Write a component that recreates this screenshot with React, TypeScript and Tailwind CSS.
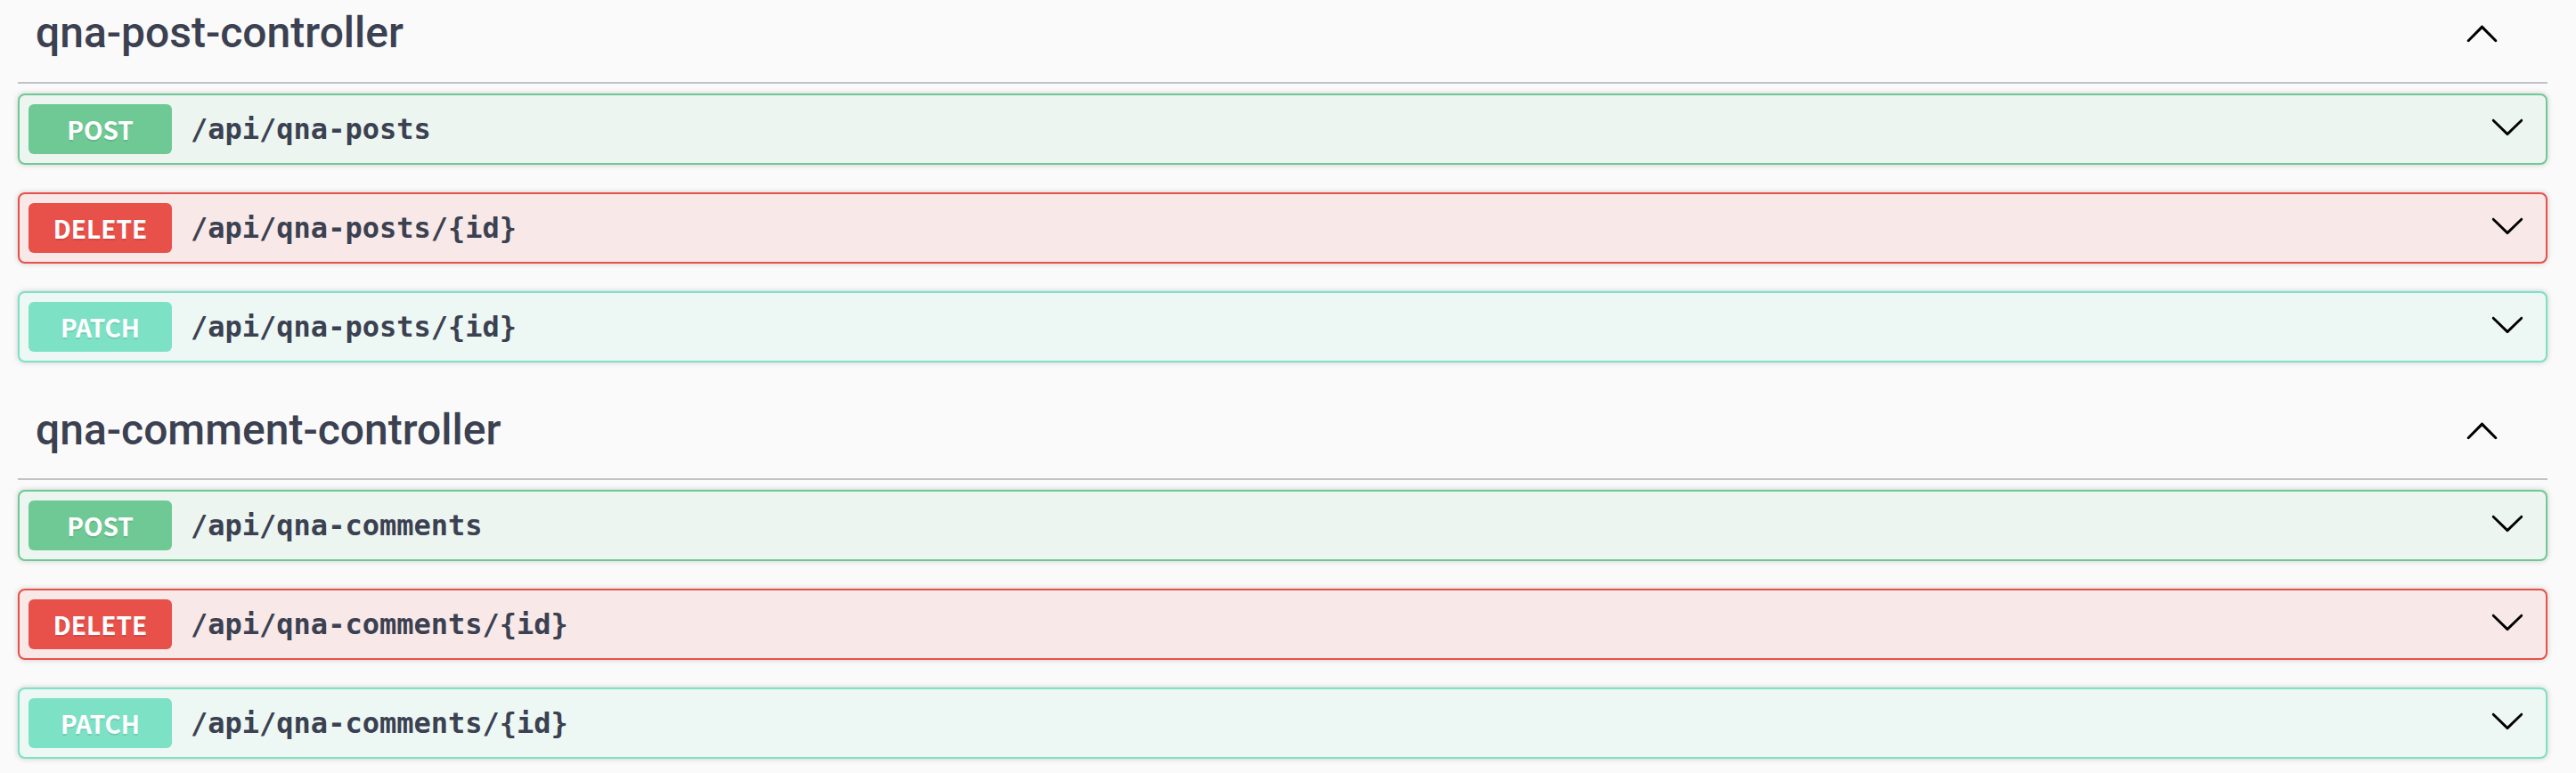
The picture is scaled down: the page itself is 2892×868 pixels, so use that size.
import React from "react";

type Method = "POST" | "DELETE" | "PATCH";

const styles: Record<Method, { block: string; badge: string }> = {
  POST: {
    block: "border-[#6fc995] bg-[#ecf5f0]",
    badge: "bg-[#6fc995]",
  },
  DELETE: {
    block: "border-[#e8504a] bg-[#f8e8e7]",
    badge: "bg-[#e8504a]",
  },
  PATCH: {
    block: "border-[#7ce1c5] bg-[#edf7f4]",
    badge: "bg-[#7ce1c5]",
  },
};

function ArrowDown() {
  return (
    <svg
      width="40"
      height="40"
      viewBox="0 0 20 20"
      className="mb-[7px] shrink-0"
      aria-hidden="true"
    >
      <path
        fill="#000"
        d="M17.418 6.109c.272-.268.709-.268.979 0s.271.701 0 .969l-7.908 7.83c-.27.268-.707.268-.979 0l-7.908-7.83c-.27-.268-.27-.701 0-.969.271-.268.709-.268.979 0L10 13.25l7.418-7.141z"
      />
    </svg>
  );
}

function ArrowUp() {
  return (
    <svg
      width="40"
      height="40"
      viewBox="0 0 20 20"
      className="shrink-0"
      aria-hidden="true"
    >
      <path
        fill="#000"
        d="M17.418 14.908c.287.294.753.294 1.04 0 .287-.294.287-.769 0-1.063l-7.68-7.83c-.287-.294-.753-.294-1.041 0L2.06 13.845c-.287.294-.287.769 0 1.063.287.294.753.294 1.04 0L10.259 7.8l7.159 7.108z"
      />
    </svg>
  );
}

function Op({ method, path }: { method: Method; path: string }) {
  const s = styles[method];
  return (
    <div
      className={`flex items-center h-[80px] rounded-[8px] border-2 shadow-[0_0_6px_rgba(0,0,0,0.19)] pl-[10px] pr-[23px] ${s.block}`}
    >
      <div
        className={`w-[161px] h-[56px] shrink-0 rounded-[6px] flex items-center justify-center text-white text-[28px] font-bold font-['Noto_Sans_CJK_KR','Noto_Sans',sans-serif] text-shadow-[0_2px_0_rgba(0,0,0,0.1)] ${s.badge}`}
      >
        {method}
      </div>
      <div className="flex-1 pl-[21px] text-[32px] font-bold text-[#3b4151] font-['DejaVu_Sans_Mono',monospace] leading-none">
        {path}
      </div>
      <ArrowDown />
    </div>
  );
}

function Section({
  title,
  headerClass,
  ops,
}: {
  title: string;
  headerClass: string;
  ops: { method: Method; path: string }[];
}) {
  return (
    <section className="flex flex-col">
      <div
        className={`flex items-center border-b-2 border-[#c1c3c7] pl-[20px] pr-[54px] box-border ${headerClass}`}
      >
        <h3 className="flex-1 text-[48px] font-medium text-[#3b4151] leading-none font-['Roboto','Noto_Sans_CJK_KR',sans-serif]">
          {title}
        </h3>
        <ArrowUp />
      </div>
      <div className="mt-[11px] flex flex-col gap-[31px]">
        {ops.map((o, i) => (
          <Op key={i} method={o.method} path={o.path} />
        ))}
      </div>
    </section>
  );
}

export default function App() {
  return (
    <div className="min-h-screen w-full bg-[#fafafa] pl-[20px] pr-[32px]">
      <Section
        title="qna-post-controller"
        headerClass="h-[94px] pt-[2px] pb-[20px]"
        ops={[
          { method: "POST", path: "/api/qna-posts" },
          { method: "DELETE", path: "/api/qna-posts/{id}" },
          { method: "PATCH", path: "/api/qna-posts/{id}" },
        ]}
      />
      <div className="mt-[30px]">
        <Section
          title="qna-comment-controller"
          headerClass="h-[102px] pt-[12px] pb-[20px]"
          ops={[
            { method: "POST", path: "/api/qna-comments" },
            { method: "DELETE", path: "/api/qna-comments/{id}" },
            { method: "PATCH", path: "/api/qna-comments/{id}" },
          ]}
        />
      </div>
    </div>
  );
}
